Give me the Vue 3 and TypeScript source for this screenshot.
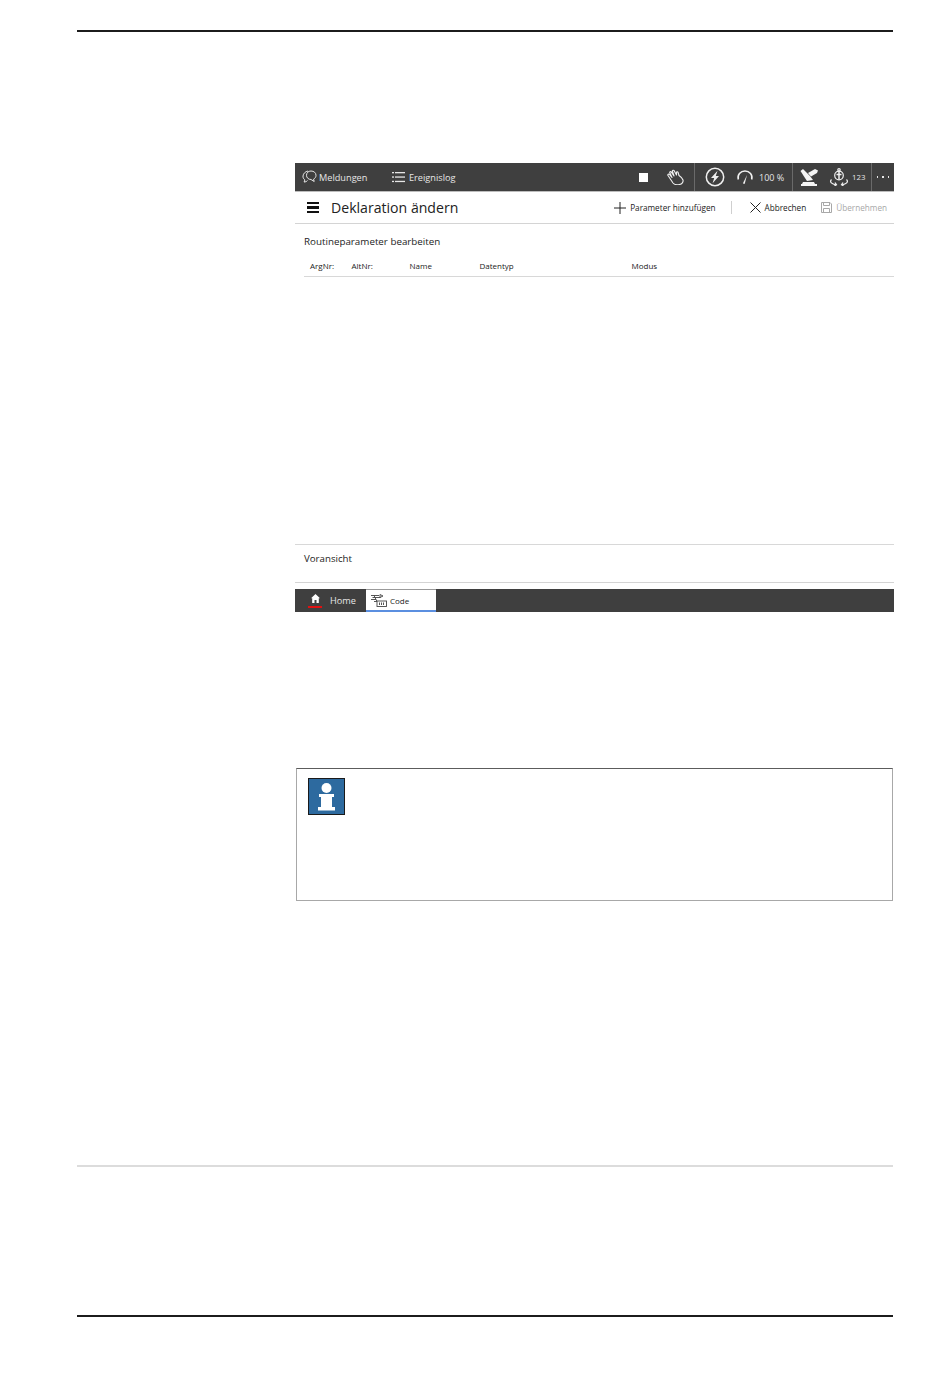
<script setup lang="ts">
const columns = ['ArgNr:', 'AltNr:', 'Name', 'Datentyp', 'Modus']
</script>

<template>
  <div class="page">
    <div class="rule-top"></div>

    <section class="screen">
      <div class="status-bar">
        <div class="status-item status-item--msg">
          <svg class="ico" width="15" height="14" viewBox="0 0 15 14" fill="none" stroke="#e6e6e6" stroke-width="1">
            <path d="M5.500 10.500c-.8 1-2 1.500-3.500 1.500.5-.6.8-1.300.8-2.100C1.600 9 .8 7.600 1 6 1.300 3.500 3.300 1.500 6 1" />
            <path d="M9 1c2.800 0 5 1.800 5 4.300 0 1.700-1 3.100-2.400 3.800l.6 2.400-3.200-2c-2.600 0-4.500-1.800-4.500-4.200C4.500 2.800 6.300 1 9 1z" />
          </svg>
          <span>Meldungen</span>
        </div>
        <div class="status-item status-item--log">
          <svg class="ico" width="13" height="12" viewBox="0 0 13 12" fill="#e6e6e6">
            <rect x="0" y="1" width="2" height="1.300" /><rect x="3" y="1" width="10" height="1.300" />
            <rect x="0" y="5.400" width="2" height="1.300" /><rect x="3" y="5.400" width="10" height="1.300" />
            <rect x="0" y="9.800" width="2" height="1.300" /><rect x="3" y="9.800" width="10" height="1.300" />
          </svg>
          <span>Ereignislog</span>
        </div>

        <div class="status-right">
          <div class="status-cell status-cell--run">
            <span class="stop"></span>
            <svg width="17" height="16" viewBox="0 0 17 16" fill="none" stroke="#f0f0f0" stroke-width="1.100" stroke-linejoin="round" stroke-linecap="round">
              <path d="M6 14 4 11 1 6.500c-.6-1 .8-1.800 1.500-1L5 8.500 2.800 3.800c-.5-1 1-1.600 1.600-.7L7 7 5.500 2.300c-.3-1 1.200-1.400 1.700-.5L9.500 6V3.500c0-1 1.300-1 1.600 0L12 6.500c1.500 1 3.500 2.500 4 4.500.5 2-1 4-3.500 4.500-2.500.5-5 .3-6.500-1.500z" />
            </svg>
          </div>
          <div class="status-cell status-cell--speed">
            <svg width="20" height="20" viewBox="0 0 20 20" fill="none">
              <circle cx="10" cy="10" r="8.700" stroke="#f0f0f0" stroke-width="1.500" />
              <path d="M12.500 3.800 6 11h3.200l-1.600 5.200L14 9h-3.200z" fill="#f0f0f0" />
            </svg>
            <svg class="gauge" width="18" height="16" viewBox="0 0 18 16" fill="none">
              <path d="M2.300 10.500C1 6 4.500 2 9 2s8 4 6.700 8.500" stroke="#f0f0f0" stroke-width="1.500" />
              <path d="M11 6 8.800 14.500c-.3.800-1.800.5-1.700-.4z" fill="#f0f0f0" />
            </svg>
            <span class="speed-value">100 %</span>
          </div>
          <div class="status-cell status-cell--robot">
            <svg width="18" height="17" viewBox="0 0 18 17" fill="#f4f4f4">
              <path d="M.5 2 3 0l7 7 3 4-6 1-2-3z" />
              <path d="M8 4l7-4 3 1.500L17 4l-6 3.500z" />
              <path d="M3 13h11l1 2H2z" />
              <rect x="1" y="15" width="16" height="2" />
            </svg>
            <svg width="20" height="18" viewBox="0 0 20 18" fill="none" stroke="#f0f0f0" stroke-width="1.200">
              <circle cx="10" cy="7.500" r="4.300" />
              <circle cx="10" cy="1.800" r="1.200" />
              <path d="M10 3v8.500M7.500 6.500h5" stroke-width="1.500" />
              <path d="M2.500 11.500c-2.500 2.500.5 4.800 4.500 5.300M17.500 11.500c2.500 2.500-.5 4.800-4.500 5.300" />
              <path d="M6 14.500l1.500 2.300-2 1M14 14.500l-1.500 2.300 2 1" />
            </svg>
            <span class="axis-value">123</span>
          </div>
          <div class="status-cell status-cell--more">
            <i></i><i></i><i></i>
          </div>
        </div>
      </div>

      <header class="view-head">
        <div class="burger"><i></i><i></i><i></i></div>
        <h1>Deklaration ändern</h1>
        <div class="actions">
          <button class="action action--add">
            <svg width="12" height="12" viewBox="0 0 12 12" stroke="#222" stroke-width="1"><path d="M6 0v12M0 6h12" /></svg>
            Parameter hinzufügen
          </button>
          <span class="action-sep"></span>
          <button class="action action--cancel">
            <svg width="11" height="11" viewBox="0 0 11 11" stroke="#222" stroke-width="1"><path d="M.5.500l10 10M10.500.500l-10 10" /></svg>
            Abbrechen
          </button>
          <button class="action action--save">
            <svg width="11" height="11" viewBox="0 0 11 11" fill="none" stroke="#a8a8a8" stroke-width="1">
              <path d="M.5.500h8.500l1.500 1.500v8.500H.5z" /><path d="M2.500.500v3h6v-3M2.500 10.500v-4h6v4" />
            </svg>
            Übernehmen
          </button>
        </div>
      </header>

      <div class="params">
        <div class="params-title">Routineparameter bearbeiten</div>
        <div class="params-head">
          <span v-for="col in columns" :key="col">{{ col }}</span>
        </div>
      </div>

      <div class="preview">Voransicht</div>

      <div class="task-bar">
        <div class="task task--home">
          <span class="home-icon">
            <svg width="9" height="9" viewBox="0 0 9 9" fill="#fff"><path d="M4.500 0 9 4.200H7.800V9H5.500V6h-2v3H1.200V4.200H0z" /></svg>
          </span>
          <span>Home</span>
        </div>
        <div class="task task--code">
          <svg width="16" height="13" viewBox="0 0 16 13" fill="none" stroke="#444" stroke-width="0.900">
            <path d="M0 1.500h8M1.500 3.500h8M0 5.500h5M3 7.500h3" />
            <path d="M9 .5l3 1.500-3 1.500z" />
            <path d="M3 1.500l3 6" />
            <rect x="6" y="7" width="9.500" height="5.500" fill="#fff" />
            <path d="M8.500 8.500v2.500M10.500 8.500v2.500M12.500 8.500v2.500" />
          </svg>
          <span>Code</span>
        </div>
      </div>
    </section>

    <aside class="note">
      <div class="note-icon">
        <svg width="35" height="35" viewBox="0 0 35 35">
          <rect width="35" height="35" fill="#2d6a9f" />
          <circle cx="17.500" cy="9" r="5" fill="#fff" />
          <path d="M10 15h15v3h-2v10h3v3.500H9V28h3V18h-2z" fill="#fff" />
        </svg>
      </div>
    </aside>

    <div class="rule-mid"></div>
    <div class="rule-bottom"></div>
  </div>
</template>

<style>
html,
body {
  margin: 0;
  background: #fff;
}
</style>

<style scoped>
.page {
  box-sizing: border-box;
  width: 950px;
  height: 1378px;
  padding: 30px 57px 0 77px;
  background: #fff;
  font-family: "Open Sans", "Noto Sans", sans-serif;
  color: #222;
}

.rule-top {
  height: 2px;
  background: #1c1c1c;
}

.screen {
  margin: 131px 0 0 218px;
  width: 599px;
}

.status-bar {
  display: flex;
  align-items: center;
  height: 28px;
  padding-left: 7px;
  background: #3f3f3f;
  border-bottom: 1px solid #bdbdbd;
  color: #e6e6e6;
  font-size: 9.200px;
}

.status-item {
  display: flex;
  align-items: center;
}

.status-item--msg {
  width: 90px;
  gap: 2px;
}

.status-item--log {
  gap: 4px;
}

.status-right {
  display: flex;
  align-items: stretch;
  height: 100%;
  margin-left: auto;
}

.status-cell {
  display: flex;
  align-items: center;
  border-left: 1px solid #6a6a6a;
}

.status-cell--run {
  border-left: none;
  gap: 19px;
  padding-right: 10px;
}

.stop {
  width: 9px;
  height: 9px;
  background: #fff;
}

.status-cell--speed {
  width: 98px;
  box-sizing: border-box;
  padding-left: 10px;
}

.gauge {
  margin-left: 11px;
}

.speed-value {
  margin-left: 5px;
  font-size: 9px;
}

.status-cell--robot {
  box-sizing: border-box;
  width: 79px;
  padding-left: 7px;
  gap: 11px;
}

.axis-value {
  margin-left: -8px;
  font-size: 7.800px;
}

.status-cell--more {
  box-sizing: border-box;
  width: 23px;
  justify-content: center;
  gap: 4px;
}

.status-cell--more i {
  width: 1.500px;
  height: 1.500px;
  background: #e6e6e6;
}

.view-head {
  display: flex;
  align-items: center;
  height: 31px;
  padding-left: 12px;
  border-bottom: 1px solid #d4d4d4;
}

.burger {
  display: flex;
  flex-direction: column;
  gap: 2px;
  width: 12px;
  margin-right: 12px;
}

.burger i {
  height: 2.500px;
  background: #111;
}

h1 {
  margin: 0;
  font-size: 14.100px;
  font-weight: 500;
  color: #222;
}

.actions {
  display: flex;
  align-items: center;
  margin-left: auto;
}

.action {
  display: flex;
  align-items: center;
  padding: 0;
  border: none;
  background: none;
  font: inherit;
  font-size: 8.200px;
  color: #222;
}

.action--add {
  gap: 4px;
}

.action-sep {
  width: 1px;
  height: 13px;
  margin: 0 18px 0 15px;
  background: #cfcfcf;
}

.action--cancel {
  gap: 4px;
}

.action--save {
  gap: 4px;
  margin: 0 7px 0 15px;
  color: #a8a8a8;
}

.params {
  box-sizing: border-box;
  height: 321px;
  padding: 11px 0 0 9px;
  border-bottom: 1px solid #d8d8d8;
}

.params-title {
  font-size: 9.800px;
  line-height: 14px;
}

.params-head {
  display: grid;
  grid-template-columns: 41.500px 58px 70px 152px 1fr;
  align-items: center;
  height: 21px;
  margin-top: 6px;
  padding-left: 6px;
  border-bottom: 1px solid #d8d8d8;
  font-size: 8px;
}

.preview {
  box-sizing: border-box;
  height: 38px;
  padding: 7px 0 0 9px;
  border-bottom: 1px solid #d4d4d4;
  font-size: 9.700px;
  line-height: 14px;
}

.task-bar {
  display: flex;
  height: 23px;
  margin-top: 6px;
  background: #3f3f3f;
}

.task {
  display: flex;
  align-items: center;
  font-size: 9.200px;
}

.task--home {
  box-sizing: border-box;
  width: 71px;
  gap: 8px;
  padding-left: 13px;
  color: #e6e6e6;
}

.home-icon {
  display: flex;
  justify-content: center;
  width: 14px;
  padding-bottom: 3px;
  border-bottom: 2px solid #e01010;
}

.task--code {
  box-sizing: border-box;
  width: 70px;
  gap: 3px;
  padding-left: 5px;
  background: #fff;
  border-top: 1px solid #9a9a9a;
  border-bottom: 2px solid #5b8fe0;
  color: #222;
  font-size: 8px;
}

.note {
  box-sizing: border-box;
  width: 597px;
  height: 133px;
  margin: 156px 0 0 219px;
  padding: 9px 0 0 11px;
  border: 1px solid #a8a8a8;
  border-top-color: #5c5c5c;
}

.note-icon {
  width: 35px;
  height: 35px;
  border: 1px solid #1a1a1a;
}

.note-icon svg {
  display: block;
}

.rule-mid {
  height: 2px;
  margin-top: 264px;
  background: #dcdcdc;
}

.rule-bottom {
  height: 2px;
  margin-top: 148px;
  background: #1c1c1c;
}
</style>
